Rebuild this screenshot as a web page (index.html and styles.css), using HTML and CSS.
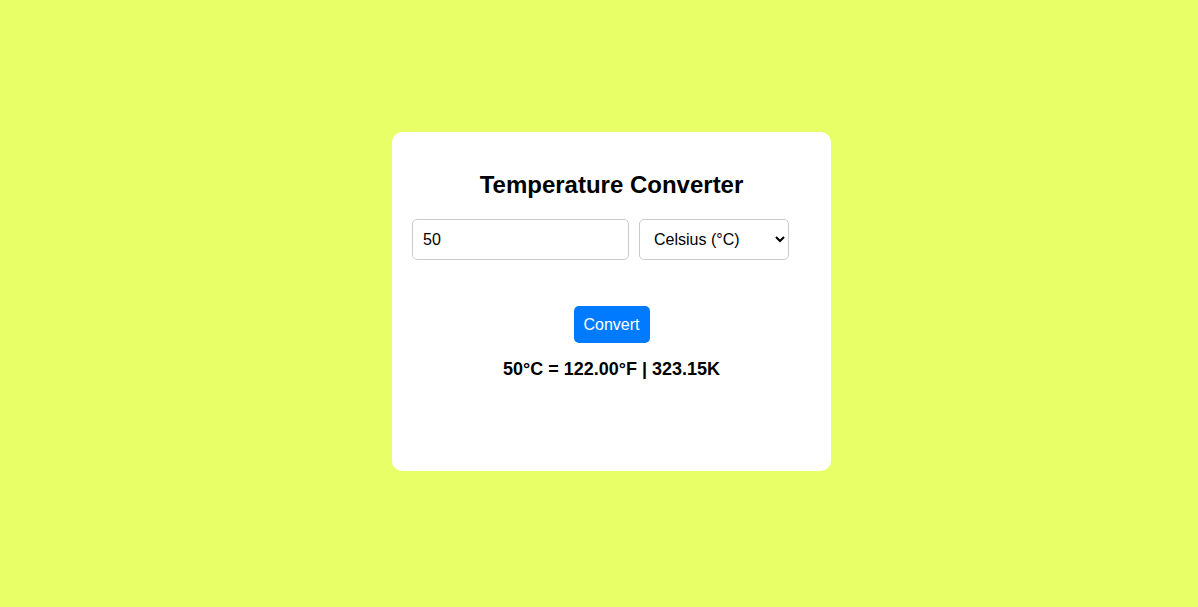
FILE: index.html
```html
<!DOCTYPE html>
<html>
<head>
<meta charset="utf-8">
<link rel="stylesheet" href="styles.css">
</head>
<body>
<div class="card">
  <h2 class="title">Temperature Converter</h2>
  <div class="row">
    <input class="num" type="text" value="50">
    <select class="unit">
      <option>Celsius (°C)</option>
      <option>Fahrenheit (°F)</option>
      <option>Kelvin (K)</option>
    </select>
  </div>
  <button class="btn">Convert</button>
  <p class="result">50°C = 122.00°F | 323.15K</p>
</div>
</body>
</html>
```
FILE: styles.css
```css
html, body {
  margin: 0;
  height: 100%;
}
body {
  background: #e8ff67;
  font-family: "Liberation Sans", Arial, sans-serif;
  display: flex;
  align-items: center;
  justify-content: center;
}
.card {
  background: #fff;
  width: 439px;
  height: 339px;
  box-sizing: border-box;
  padding: 20px;
  border-radius: 10px;
  display: flex;
  flex-direction: column;
  align-items: center;
  margin: -4px 0 0 25px;
}
.title {
  font-size: 24px;
  font-weight: bold;
  margin: 19px 0 20px;
  line-height: 28px;
}
.row {
  align-self: stretch;
  display: flex;
  gap: 10px;
}
.num {
  width: 217px;
  height: 41px;
  box-sizing: border-box;
  padding: 0 10px;
  border: 1px solid #ccc;
  border-radius: 5px;
  font-family: inherit;
  font-size: 16px;
  color: #000;
}
.unit {
  width: 150px;
  height: 41px;
  box-sizing: border-box;
  padding: 0 10px;
  border: 1px solid #ccc;
  border-radius: 5px;
  font-family: inherit;
  font-size: 16px;
  background: #fff;
  color: #000;
}
.btn {
  margin-top: 46px;
  width: 76px;
  height: 37px;
  border: none;
  border-radius: 5px;
  background: #007bff;
  color: #fff;
  font-family: inherit;
  font-size: 16px;
  padding: 0;
}
.result {
  margin: 15px 0 0;
  font-size: 18px;
  font-weight: bold;
  line-height: 22px;
}
```
